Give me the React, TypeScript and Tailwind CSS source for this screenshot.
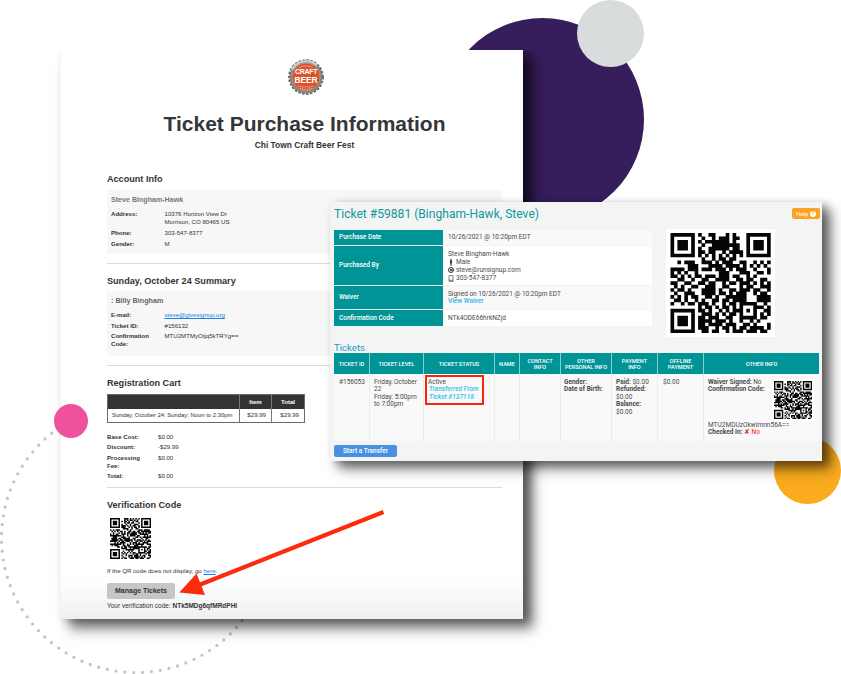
import React from "react";

const QR_ROWS = [
  "XXXXXXX.X..XX...X.X...XXXXXXX",
  "X.....X..X..X.XXX.XX..X.....X",
  "X.XXX.X.X.XXXXXXX.X...X.XXX.X",
  "X.XXX.X..X..XXXXXXXX..X.XXX.X",
  "X.XXX.X.X..XXXXXX.XX..X.XXX.X",
  "X.....X.XX.XX..X.XXXX.X.....X",
  "XXXXXXX.X.X.X.X.X.X.X.XXXXXXX",
  ".........X..X.XX.XX..........",
  "..X.XXX..XXX.X.XXX..XX..X.X.X",
  ".....XXX...XXXX.XXXX.X.X.X.X.",
  "XXXX.XXX.XXX.XXX.X.XXX..X...X",
  "X.X.X..X......XXX...XXX..XX.X",
  "XX.X.X.XX.XXX.XXX.XX..X.X....",
  "..XX..X..XX..XXXX..XX.XX..XX.",
  "XX..XX..XX.XX..X.XX.XXX.X.X.X",
  ".X.X..XX..XXX..XX...X.XX..XXX",
  "X.XX.X...XXXX.X..XX.XXX.XX..X",
  ".X..XXX..XXXX.XX.X.XXX..X.XX.",
  "X.X.X.XX..XX.X..XXXXXX...XXXX",
  ".XX.X..X.X..XX.XX.XXXX...XXXX",
  "X..X.XX.XXX.X..X.XX.XXXXX..X.",
  "........X.XX.X.XX.X.X...XXX.X",
  "XXXXXXX.XX.X..X.X.XXX.X.X..XX",
  "X.....X..XXX.X.X.XX.X...X.X.X",
  "X.XXX.X.XX.XXX..XX..XXXXX.XX.",
  "X.XXX.X.XXXX.XXX.X..X..X.X...",
  "X.XXX.X.XX.XXXX.XXX..XX.X...X",
  "X.....X.XXX..X.XX.X.XX.XXXX.X",
  "XXXXXXX..XX.XX..X.XXX.XXX.XX.",
];

const QrCode = ({ className, flip = false }: { className: string; flip?: boolean }) => {
  let d = "";
  for (let r = 0; r < 29; r++) {
    for (let c = 0; c < 29; c++) {
      const on = flip ? QR_ROWS[c][r] : QR_ROWS[r][c];
      if (on === "X") d += `M${c} ${r}h1.06v1.06h-1.06z`;
    }
  }
  return (
    <svg className={className} viewBox="0 0 29 29">
      <path d={d} fill="#050505" />
    </svg>
  );
};

const BottleCap = () => (
  <div className="relative h-[38px] w-[38px]">
    <svg className="block h-[38px] w-[38px]" viewBox="0 0 38 38">
      <circle cx="19" cy="19" r="16.6" fill="#858585" />
      <circle cx="19" cy="19" r="17" fill="none" stroke="#666" strokeWidth="1.800" strokeDasharray="2.4 1.6" />
      <path d="M5 12A15.8 15.8 0 0 1 30 7.500" fill="none" stroke="#c9c9c9" strokeWidth="2.500" />
      <circle cx="19" cy="19" r="14" fill="#d9532c" stroke="#a7a09c" strokeWidth="0.8" />
      <path d="M12 9.500q7-3 14 0M11 28q8 2 16 0M13 30.300q6 2 12 0" fill="none" stroke="#f0a58c" strokeWidth="1.200" strokeDasharray="1.2 0.6" />
    </svg>
    <div className="absolute inset-x-0 top-[10px] text-center font-bold text-white">
      <p className="h-[8px] text-[7px] leading-[8px] tracking-[-0.3px]">CRAFT</p>
      <p className="h-[9px] text-[8.500px] leading-[9px] tracking-[-0.2px]">BEER</p>
    </div>
  </div>
);

const Receipt = () => {
  return (
    <div className="absolute left-[60px] top-[50px] h-[569px] w-[463px] bg-white bg-[linear-gradient(to_bottom,#fff_93%,#eeefef)] border-l border-[#f5f5f5] pl-[46px] pr-[21px] font-['Liberation_Sans',sans-serif] text-[6.1px] leading-[8px] text-[#333] shadow-[10px_10px_12px_0px_rgba(0,0,0,0.5),6px_2px_9px_0px_rgba(0,0,0,0.35)] [clip-path:inset(0_-30px_-35px_-8px)]">
      <div className="flex h-[60px] items-start justify-center pt-2 pl-[3px]">
        <BottleCap />
      </div>
      <h1 className="h-[27px] text-center text-[21px] font-bold leading-[27px] whitespace-nowrap text-[#353638]">Ticket Purchase Information</h1>
      <p className="h-4 text-center text-[8.4px] font-bold leading-4">Chi Town Craft Beer Fest</p>

      <h2 className="mt-[20px] h-3 text-[9.1px] font-bold leading-3">Account Info</h2>
      <div className="mt-[5px] h-16 bg-[#f7f7f7] px-1 pt-[5px]">
        <p className="h-[10px] text-[7.1px] font-bold leading-[10px] text-[#777]">Steve Bingham-Hawk</p>
        <div className="mt-[5px] flex">
          <b className="w-[53.500px]">Address:</b>
          <p>10376 Horizon View Dr<br />Morrison, CO 80465 US</p>
        </div>
        <div className="mt-[2.500px] flex">
          <b className="w-[53.500px]">Phone:</b>
          <p>303-547-8377</p>
        </div>
        <div className="mt-[3px] flex">
          <b className="w-[53.500px]">Gender:</b>
          <p>M</p>
        </div>
      </div>
      <hr className="mt-[9px] border-[#dcdcdc]" />

      <h2 className="mt-[11px] h-3 text-[9.1px] font-bold leading-3">Sunday, October 24 Summary</h2>
      <div className="mt-1 h-[65px] bg-[#f7f7f7] px-1 pt-[5px]">
        <p className="h-[10px] text-[7.200px] font-bold leading-[10px] text-[#666]">: Billy Bingham</p>
        <div className="mt-[5px] flex">
          <b className="w-[53.500px]">E-mail:</b>
          <p className="text-[#1a7fe0] underline">steve@givesignup.org</p>
        </div>
        <div className="mt-[3px] flex">
          <b className="w-[53.500px]">Ticket ID:</b>
          <p>#156132</p>
        </div>
        <div className="mt-[2px] flex">
          <b className="w-[53.500px]">Confirmation<br />Code:</b>
          <p>MTU2MTMyOtjq5kTRYg==</p>
        </div>
      </div>
      <hr className="mt-[9px] border-[#dcdcdc]" />

      <h2 className="mt-[11px] h-3 text-[9.1px] font-bold leading-3">Registration Cart</h2>
      <div className="mt-[5px] grid w-[198px] grid-cols-[131px_32px_33px] border border-[#6a6a6a]">
        <div className="h-[14px] bg-[#333436]"></div>
        <b className="border-l border-[#777] bg-[#333436] text-center leading-[14px] text-white">Item</b>
        <b className="border-l border-[#777] bg-[#333436] text-center leading-[14px] text-white">Total</b>
        <p className="h-[13px] whitespace-nowrap pl-1 text-[5.9px] leading-3">Sunday, October 24: Sunday: Noon to 2:30pm</p>
        <p className="border-l border-[#777] pr-[5px] text-right leading-3">$29.99</p>
        <p className="border-l border-[#777] pr-[5px] text-right leading-3">$29.99</p>
      </div>
      <div className="mt-[10px] flex">
        <b className="w-[51px]">Base Cost:</b>
        <p>$0.00</p>
      </div>
      <div className="mt-[2px] flex">
        <b className="w-[51px]">Discount:</b>
        <p>-$29.99</p>
      </div>
      <div className="mt-[3px] flex">
        <b className="w-[51px]">Processing<br />Fee:</b>
        <p>$0.00</p>
      </div>
      <div className="mt-[2px] flex">
        <b className="w-[51px]">Total:</b>
        <p>$0.00</p>
      </div>
      <hr className="mt-[7px] border-[#dcdcdc]" />

      <h2 className="mt-[11px] h-3 text-[9.1px] font-bold leading-3">Verification Code</h2>
      <QrCode className="ml-[3px] mt-[7px] block h-[41px] w-[41px]" flip />
      <p className="mt-2">If the QR code does not display, go <span className="text-[#1a7fe0] underline">here</span>.</p>
      <div className="mt-2 h-4 w-[68px] rounded-[2px] bg-[#c6c6c6] text-center text-[7px] font-bold leading-4">Manage Tickets</div>
      <p className="mt-[3px] text-[6.5px]">Your verification code: <b>NTk5MDg6qfMRdPHI</b></p>
    </div>
  );
};

const TicketPanel = () => {
  return (
    <div className="absolute left-[330px] top-[202px] h-[259px] w-[492px] bg-[#f3f5f5] pl-1 pr-[2px] pt-[5px] font-[Roboto,sans-serif] text-[6.5px] leading-[7.400px] text-[#4a4a4a] shadow-[9px_8px_12px_0px_rgba(0,0,0,0.5),5px_3px_8px_0px_rgba(0,0,0,0.3)]">
      <div className="flex h-[23px] items-start justify-between">
        <h2 className="text-[12.080px] leading-[14px] whitespace-nowrap text-[#12979a]">Ticket #59881 (Bingham-Hawk, Steve)</h2>
        <div className="mt-[1px] flex h-[11px] w-7 items-center justify-center gap-[1.500px] rounded-[2px] bg-[#fca41f] text-[6px] font-medium text-[#fff0dc]">
          Help
          <span className="flex h-[6px] w-[6px] items-center justify-center rounded-full bg-white text-[5px] font-bold text-[#fca41f]">?</span>
        </div>
      </div>
      <div className="flex h-[111px] gap-[14px]">
        <div className="grid h-[96px] w-[318px] grid-cols-[109px_209px] grid-rows-[15px_39px_23px_16px] gap-y-[1px]">
          <div className="flex items-center bg-[#009496] pl-[5px] pt-[1px] font-medium text-white">Purchase Date</div>
          <div className="flex items-center bg-[#f9f9f9] pl-[5px] pt-[1px]">10/26/2021 @ 10:20pm EDT</div>
          <div className="flex items-center bg-[#009496] pl-[5px] pt-[1px] font-medium text-white">Purchased By</div>
          <div className="bg-white pl-[5px] pt-[4px] leading-[8px]">
            <p>Steve Bingham-Hawk</p>
            <p className="flex items-center gap-[2px]">
              <svg className="h-[7px] w-[6px]" viewBox="0 0 6 7" fill="#333"><circle cx="3" cy="1" r="0.900" /><path d="M1.900 2.100h2.200v2.200h-.5v2.400H2.400V4.300h-.5z" /></svg>
              Male
            </p>
            <p className="flex items-center gap-[2px]">
              <svg className="h-[6px] w-[6px]" viewBox="0 0 6 6" fill="none" stroke="#333"><circle cx="3" cy="3" r="2.500" /><circle cx="3" cy="3" r="0.800" /><path d="M3.900 2v1.500h1" strokeWidth="0.600" /></svg>
              steve@runsignup.com
            </p>
            <p className="flex items-center gap-[2px]">
              <svg className="h-[7px] w-[6px]" viewBox="0 0 6 7" fill="none" stroke="#444" strokeWidth="0.700"><rect x="1" y="0.500" width="4" height="6" rx="0.500" /><path d="M1 5.300h4" /></svg>
              303-547-8377
            </p>
          </div>
          <div className="flex items-center bg-[#009496] pl-[5px] pt-[1px] font-medium text-white">Waiver</div>
          <div className="flex flex-col justify-center bg-[#f9f9f9] pl-[5px] pt-[1px]">
            <p>Signed on 10/26/2021 @ 10:20pm EDT</p>
            <p className="font-medium text-[#2cb5e8]">View Waiver</p>
          </div>
          <div className="flex items-center bg-[#009496] pl-[5px] pt-[1px] font-medium text-white">Confirmation Code</div>
          <div className="flex items-center bg-white pl-[5px] pt-[1px]">NTk4ODE66hrkNZjd</div>
        </div>
        <div className="-mt-[1px] h-[108px] w-[109px] bg-white p-1">
          <QrCode className="block h-[100px] w-[101px]" />
        </div>
      </div>

      <h3 className="h-3 text-[9.600px] leading-[13px] text-[#2a93c5]">Tickets</h3>
      <div className="grid w-[485px] grid-cols-[35px_54px_71px_25px_41px_51px_46px_46px_116px]">
        <div className="flex h-[21px] items-center justify-center bg-[#009496] pt-[1px] text-center text-[5.600px] font-medium leading-[6px] text-white">TICKET ID</div>
        <div className="flex items-center justify-center border-l border-[#8ccccc] bg-[#009496] pt-[1px] text-center text-[5.600px] font-medium leading-[6px] text-white">TICKET LEVEL</div>
        <div className="flex items-center justify-center border-l border-[#8ccccc] bg-[#009496] pt-[1px] text-center text-[5.600px] font-medium leading-[6px] text-white">TICKET STATUS</div>
        <div className="flex items-center justify-center border-l border-[#8ccccc] bg-[#009496] pt-[1px] text-center text-[5.600px] font-medium leading-[6px] text-white">NAME</div>
        <div className="flex items-center justify-center border-l border-[#8ccccc] bg-[#009496] text-center text-[5.600px] font-medium leading-[6px] text-white">CONTACT<br />INFO</div>
        <div className="flex items-center justify-center whitespace-nowrap border-l border-[#8ccccc] bg-[#009496] text-center text-[5.600px] font-medium leading-[6px] text-white">OTHER<br />PERSONAL INFO</div>
        <div className="flex items-center justify-center border-l border-[#8ccccc] bg-[#009496] text-center text-[5.600px] font-medium leading-[6px] text-white">PAYMENT<br />INFO</div>
        <div className="flex items-center justify-center border-l border-[#8ccccc] bg-[#009496] text-center text-[5.600px] font-medium leading-[6px] text-white">OFFLINE<br />PAYMENT</div>
        <div className="flex items-center justify-center border-l border-[#8ccccc] bg-[#009496] pt-[1px] text-center text-[5.600px] font-medium leading-[6px] text-white">OTHER INFO</div>

        <div className="h-[67px] bg-[#f9f9f9] pl-[5px] pt-[5px]">#156053</div>
        <div className="whitespace-nowrap border-l border-[#ececec] bg-[#f9f9f9] pl-1 pt-[5px]">Friday, October<br />22<br />Friday: 5:00pm<br />to 7:00pm</div>
        <div className="border-l border-[#ececec] bg-[#f9f9f9] pl-[1px] pt-[1px]">
          <div className="h-[30px] w-[59px] whitespace-nowrap border-2 border-[#f5260c] pl-[1px] pt-[2px]">
            Active
            <p className="pl-[1px] text-[6.600px] font-medium italic text-[#35bdeb]">Transferred From<br />Ticket #137118</p>
          </div>
        </div>
        <div className="border-l border-[#ececec] bg-[#f9f9f9]"></div>
        <div className="border-l border-[#ececec] bg-[#f9f9f9]"></div>
        <div className="whitespace-nowrap border-l border-[#ececec] bg-[#f9f9f9] pl-[3px] pt-[5px]"><b>Gender:<br />Date of Birth:</b></div>
        <div className="border-l border-[#ececec] bg-[#f9f9f9] pl-1 pt-[5px]"><b>Paid:</b> $0.00<br /><b>Refunded:</b><br />$0.00<br /><b>Balance:</b><br />$0.00</div>
        <div className="border-l border-[#ececec] bg-[#f9f9f9] pl-[5px] pt-[5px]">$0.00</div>
        <div className="border-l border-[#ececec] bg-[#f9f9f9] pl-1 pt-[5px]">
          <div className="flex h-[43px] justify-between pr-[5px]">
            <p className="whitespace-nowrap"><b>Waiver Signed:</b> No<br /><b>Confirmation Code:</b></p>
            <div className="h-[42px] w-[42px] bg-white p-[2px]">
              <QrCode className="block h-[38px] w-[38px]" flip />
            </div>
          </div>
          <p className="tracking-[0.03px]">MTU2MDUzOkwImnn56A==</p>
          <p><b>Checked In:</b> <span className="text-[#f5260c]">✘ No</span></p>
        </div>
      </div>
      <div className="mt-1 h-3 w-[63px] rounded-[2px] bg-[#4a90e2] text-center font-medium leading-[13px] text-white">Start a Transfer</div>
    </div>
  );
};

const App = () => {
  return (
    <div className="relative h-[674px] w-[841px] overflow-hidden bg-white">
      <div className="absolute left-[441px] top-[18px] h-[203px] w-[203px] rounded-full bg-[#361d5b]"></div>
      <div className="absolute left-[577px] top-0 h-[67px] w-[67px] rounded-full bg-[#d9dcdd]"></div>
      <div className="absolute left-[774px] top-[437px] h-[67px] w-[67px] rounded-full bg-[#faab1e]"></div>
      <svg className="absolute left-0 top-[400px] h-[274px] w-[280px]" viewBox="0 0 280 274">
        <circle cx="136" cy="138" r="134.500" fill="none" stroke="#c2c3c4" strokeWidth="3.200" strokeLinecap="round" strokeDasharray="0 8.895" />
      </svg>
      <Receipt />
      <div className="absolute left-[54px] top-[404px] h-[34px] w-[34px] rounded-full bg-[#ef529d]"></div>
      <TicketPanel />
      <svg className="absolute left-[175px] top-[505px] h-[95px] w-[215px]" viewBox="0 0 215 95">
        <path d="M208.500 7L24 80" stroke="#fb2b0b" strokeWidth="4.200" />
        <path d="M4.300 87.500L21.500 68.500L30 90z" fill="#fb2b0b" />
      </svg>
    </div>
  );
};

export default App;
